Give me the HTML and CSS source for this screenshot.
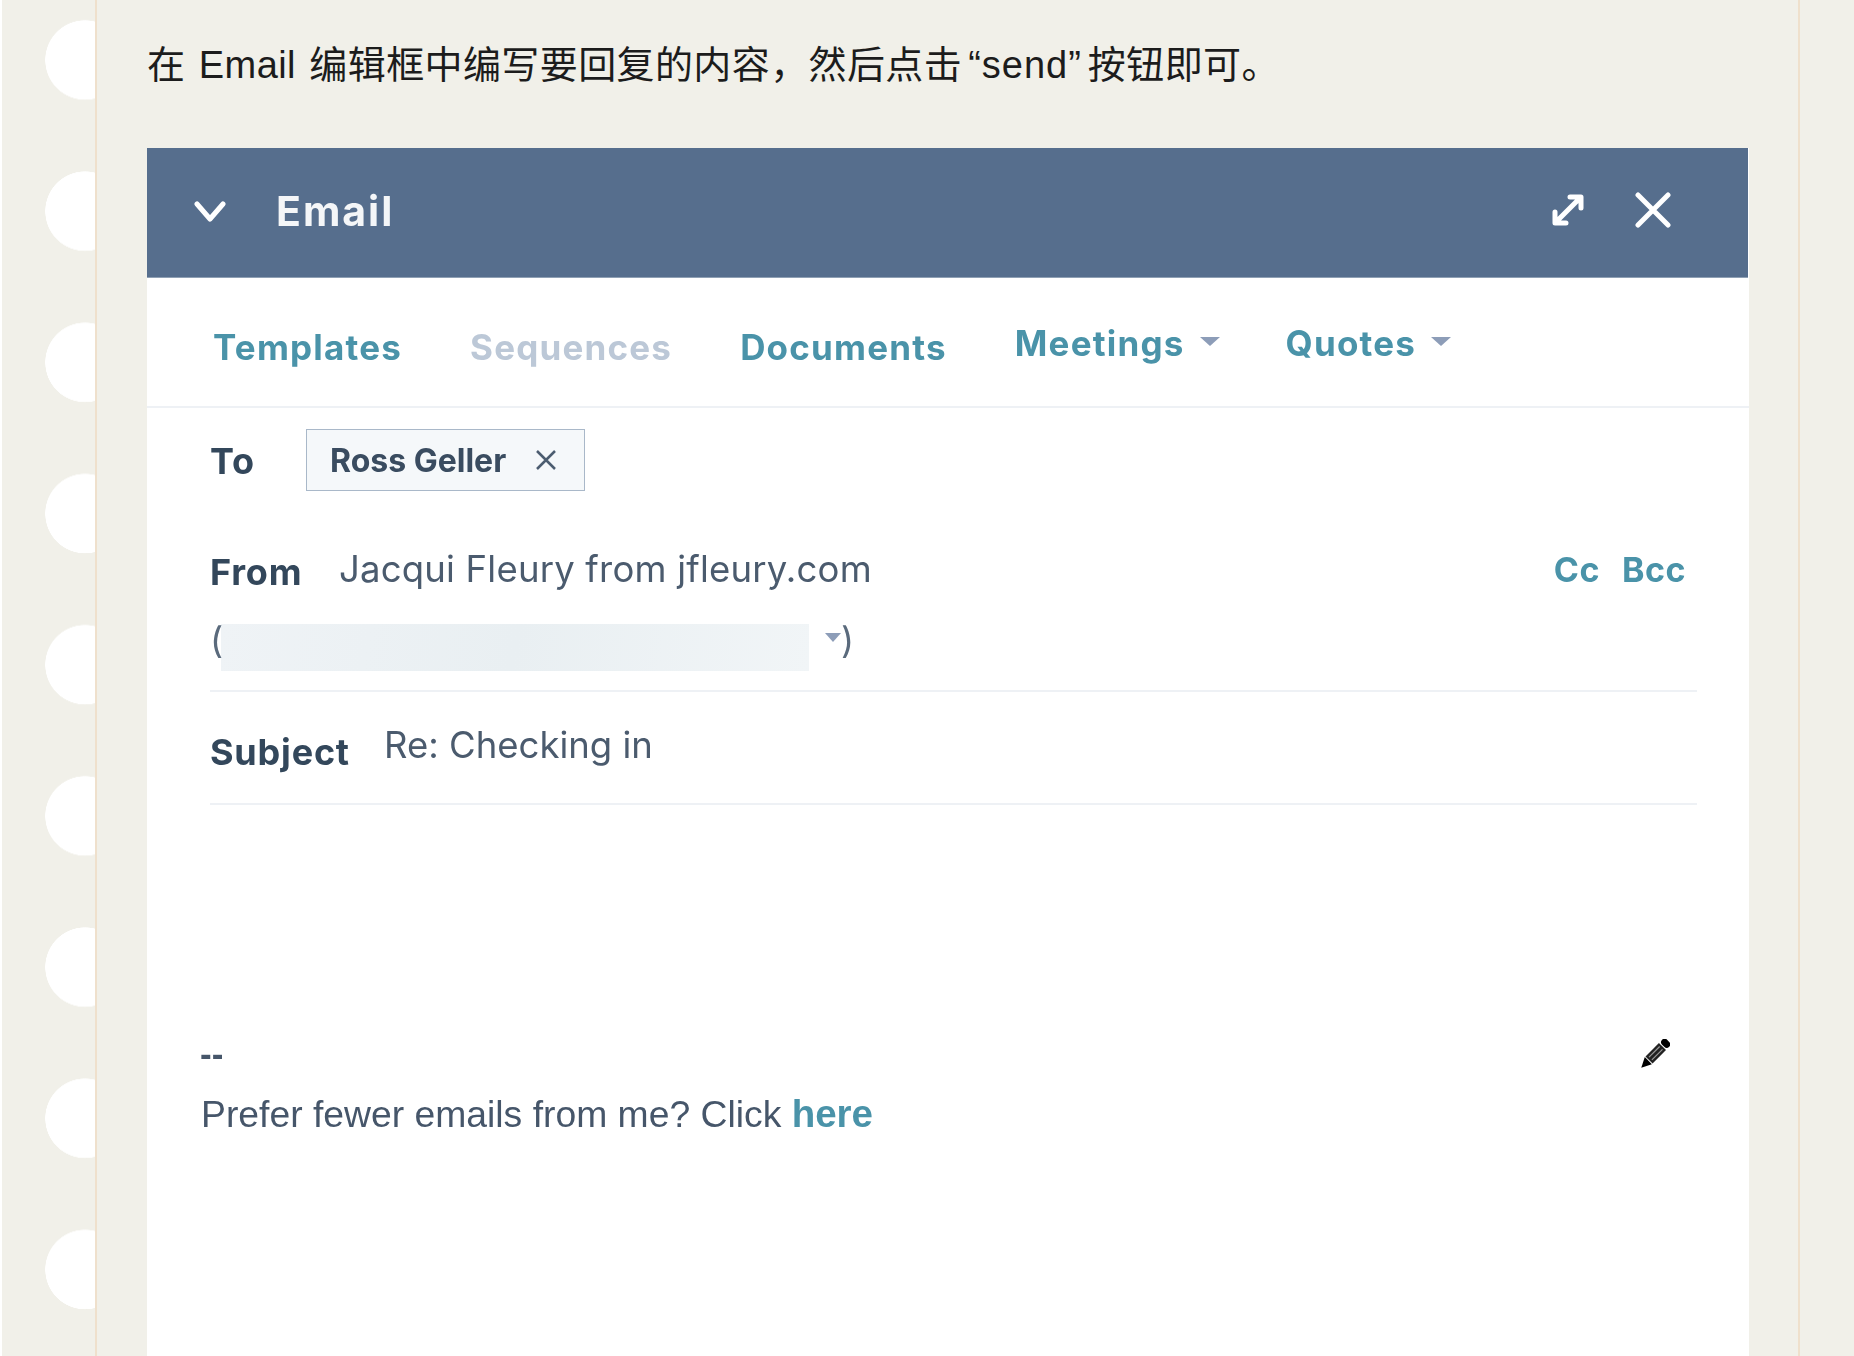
FILE: index.html
```html
<!DOCTYPE html>
<html lang="zh-CN">
<head>
<meta charset="utf-8">
<title>Email</title>
<link rel="stylesheet" href="styles.css">
</head>
<body>
<div class="paper">
  <div class="gutter"></div>
  <main class="sheet">
    <p class="intro">在 Email 编辑框中编写要回复的内容，然后点击<span class="quoted">“send”</span>按钮即可。</p>
    <section class="card">
      <header class="bar">
        <svg class="chev soft" viewBox="0 0 34 22"><path d="M3 3 16 18 29 3"/></svg>
        <span class="bar-title soft">Email</span>
        <svg class="expand soft" viewBox="0 0 36 36"><path d="M6 30 30 6M20 5h11v11M5 20v11h11"/></svg>
        <svg class="close soft" viewBox="0 0 38 38"><path d="M4 4 34 34M34 4 4 34"/></svg>
      </header>
      <nav class="tabs">
        <span class="tab t-templates soft">Templates</span>
        <span class="tab t-seq soft">Sequences</span>
        <span class="tab t-docs soft">Documents</span>
        <span class="tab drop t-meet soft">Meetings<i class="caret"></i></span>
        <span class="tab drop t-quotes soft">Quotes<i class="caret"></i></span>
      </nav>
      <div class="fields">
        <div class="row-to">
          <span class="label label-to soft">To</span>
          <span class="chip"><span class="chip-name soft">Ross Geller</span>
            <svg class="chip-x soft" viewBox="0 0 22 22"><path d="M2 2 20 20M20 2 2 20"/></svg></span>
        </div>
        <div class="row-from">
          <span class="label label-from soft">From</span>
          <span class="value value-from soft">Jacqui Fleury from jfleury.com</span>
          <span class="cc soft"><span>Cc</span><span>Bcc</span></span>
        </div>
        <div class="row-addr">
          <span class="paren soft">(</span>
          <span class="redact"></span>
          <i class="caret caret-small soft"></i>
          <span class="paren soft">)</span>
        </div>
        <div class="row-subject">
          <span class="label label-subject soft">Subject</span>
          <span class="value soft">Re: Checking in</span>
        </div>
      </div>
      <div class="signature">
        <div class="sig-top">
          <span class="sig sig-dash soft">--</span>
          <svg class="pencil soft" viewBox="0 0 32 32">
            <g transform="rotate(45 16 16)">
              <rect x="11" y="-4" width="10" height="7" rx="3.500" fill="#000"/>
              <rect x="11" y="4" width="10" height="19" fill="#222"/>
              <path d="M14 6v15M18 6v15" stroke="#999" stroke-width="1.200"/>
              <path d="M11 24h10l-5 10z" fill="#000"/>
            </g>
          </svg>
        </div>
        <p class="sig sig-line soft">Prefer fewer emails from me? Click <a class="here">here</a></p>
      </div>
    </section>
  </main>
  <div class="margin-right"></div>
</div>
</body>
</html>
```
FILE: styles.css
```css
html, body { margin: 0; padding: 0; height: 1356px; overflow: hidden; background: #fff; }
body { font-family: "Inter", "Noto Sans", sans-serif; }
.paper { margin-left: 2px; height: 1356px; display: flex; background: #f1f0e9; }
.gutter {
  width: 93px; flex: none; border-right: 2px solid #efe0cc;
  background-image: radial-gradient(circle 40px at 83px 60px, #fff 39.500px, rgba(255,255,255,0) 40px);
  background-size: 93px 151.200px;
  background-repeat: repeat-y;
}
.sheet { width: 1703px; flex: none; box-sizing: border-box; padding: 0 51px 0 50px; border-right: 2px solid #efe0cc; }
.margin-right { flex: 1; }
.intro {
  margin: 0; height: 148px; box-sizing: border-box; padding-top: 41px;
  font: 400 38px/48px "Liberation Sans", "Noto Sans CJK SC", sans-serif; letter-spacing: 0.4px; word-spacing: 2.500px; color: #1c1c1c; white-space: nowrap;
}
.quoted { margin: 0 6px; letter-spacing: 1px; }
.soft { filter: blur(0.7px); }
.card { background: #fff; height: 1208px; width: 1602px; }
.bar { height: 130px; margin-right: 1px; background: #566e8d; display: flex; align-items: center; color: #fff; padding-left: 47px; box-shadow: inset 0 -1px 0 #8fa0b4; }
.chev { width: 34px; height: 22px; flex: none; margin-bottom: 2px; }
.chev path, .expand path, .close path { fill: none; stroke: #fff; stroke-width: 5px; stroke-linecap: round; stroke-linejoin: round; }
.bar-title { margin-left: 48px; font-size: 41px; font-weight: 700; letter-spacing: 2px; color: #f4f6f8; margin-bottom: 5px; }
.expand { width: 36px; height: 36px; flex: none; margin-left: auto; margin-bottom: 7px; }
.close { width: 38px; height: 38px; flex: none; margin-left: 48px; margin-right: 76px; margin-bottom: 7px; }
.tabs { height: 119px; padding: 9px 0 0 66px; border-bottom: 2px solid #eef1f5; display: flex; align-items: center; gap: 68px; font-size: 35px; font-weight: 700; letter-spacing: 1.2px; color: #4a93a9; }
.tab { display: flex; align-items: center; white-space: nowrap; }
.t-seq { color: #bcc8d7; }
.t-quotes { margin-left: -2px; }
.drop { margin-bottom: 7px; }
.caret { display: block; width: 0; height: 0; border-left: 10px solid transparent; border-right: 10px solid transparent; border-top: 9px solid #8d9db8; margin-left: 15px; margin-top: -3px; }
.fields { padding: 0 52px 0 63px; color: #46566a; }
.label { font-size: 36px; font-weight: 700; letter-spacing: 0.8px; color: #33475b; white-space: nowrap; }
.value { font-size: 36.500px; font-weight: 400; color: #4b5b6e; white-space: nowrap; }
.value-from { letter-spacing: 0.2px; }
.row-to { display: flex; align-items: center; padding-top: 21px; }
.label-to { width: 96px; margin-top: 2px; }
.chip { box-sizing: border-box; width: 279px; height: 62px; display: flex; align-items: center; padding-left: 23px; background: #f5f8fa; border: 1.500px solid #a9b8c9; }
.chip-name { font-size: 32px; font-weight: 700; color: #3a4c60; white-space: nowrap; }
.chip-x { width: 22px; height: 22px; margin-left: auto; margin-right: 27px; }
.chip-x path { fill: none; stroke: #4c5d70; stroke-width: 2.500px; }
.row-from { display: flex; align-items: center; height: 58px; margin-top: 49px; }
.label-from { width: 129px; margin-top: 6px; }
.cc { margin-left: auto; margin-right: 11px; display: flex; gap: 22px; font-size: 34px; font-weight: 700; color: #4a93a9; letter-spacing: 0.5px; }
.row-addr { box-sizing: border-box; display: flex; align-items: flex-start; height: 94px; padding-top: 19px; border-bottom: 2px solid #eef1f5; }
.paren { font-size: 36px; line-height: 47px; color: #5a6a7c; width: 11px; flex: none; }
.redact { width: 588px; height: 47px; margin-top: 7px; background: linear-gradient(100deg, #eff3f6, #e9eff2 50%, #f1f5f7); }
.caret-small { border-left-width: 8px; border-right-width: 8px; border-top-width: 9px; margin: 16px 0 0 16px; }
.row-subject { box-sizing: border-box; height: 113px; border-bottom: 2px solid #eef1f5; display: flex; align-items: center; }
.label-subject { width: 174px; margin-top: 8px; }
.row-subject .value { margin-bottom: 6px; }
.signature { padding: 229px 79px 0 54px; }
.sig-top { display: flex; justify-content: space-between; align-items: flex-start; }
.sig { font: 400 37.300px/40px "Liberation Sans", sans-serif; color: #46566a; }
.sig-dash { font-weight: 700; font-size: 35px; margin-left: -1px; }
.pencil { width: 32px; height: 32px; margin-top: 5px; }
.sig-line { margin: 20px 0 0; white-space: nowrap; }
.here { color: #4a93a9; font-weight: 700; font-size: 38.500px; }
```
